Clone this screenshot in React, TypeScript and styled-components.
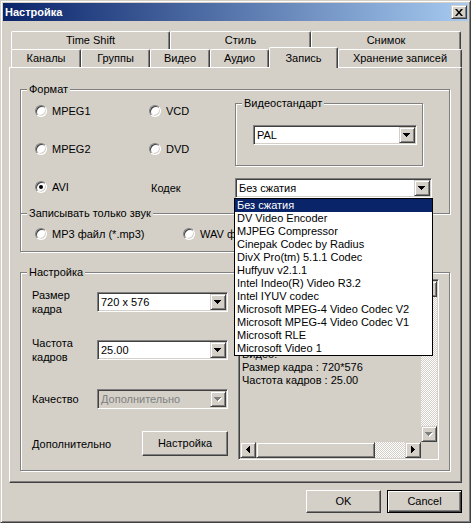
import React from 'react';
import styled, { createGlobalStyle, css } from 'styled-components';

const face = '#d4d0c8';
const light = '#ffffff';
const shadow = '#808080';
const dark = '#404040';
const navy = '#0a246a';

const GlobalStyle = createGlobalStyle`
  html, body {
    margin: 0;
    padding: 0;
    background: ${face};
  }

  body {
    font-family: "Liberation Sans", Arial, sans-serif;
    font-size: 11px;
    color: #000;
  }

  * {
    box-sizing: border-box;
  }
`;

const rowOneTabs = [
  { label: 'Time Shift', w: 159 },
  { label: 'Стиль', w: 141 },
  { label: 'Снимок', w: 150 }
];

const rowTwoTabs = [
  { label: 'Каналы', w: 70 },
  { label: 'Группы', w: 69 },
  { label: 'Видео', w: 60 },
  { label: 'Аудио', w: 59 },
  { label: 'Запись', w: 69, active: true },
  { label: 'Хранение записей', w: 124 }
];

const codecs = [
  'Без сжатия',
  'DV Video Encoder',
  'MJPEG Compressor',
  'Cinepak Codec by Radius',
  'DivX Pro(tm) 5.1.1 Codec',
  'Huffyuv v2.1.1',
  'Intel Indeo(R) Video R3.2',
  'Intel IYUV codec',
  'Microsoft MPEG-4 Video Codec V2',
  'Microsoft MPEG-4 Video Codec V1',
  'Microsoft RLE',
  'Microsoft Video 1'
];

// the first lines sit under the open codec list, so they stay blank
const memoLines = [
  '',
  '',
  '',
  '',
  '',
  'Видео:',
  'Размер кадра : 720*576',
  'Частота кадров : 25.00'
];

const Window = styled.div`
  width: 471px;
  height: 523px;
  background: ${face};
  border: 1px solid;
  border-color: ${face} ${dark} ${dark} ${face};
  box-shadow: inset 1px 1px ${light}, inset -1px -1px ${shadow};
  padding: 2px;
  display: flex;
  flex-direction: column;
`;

const TitleBar = styled.div`
  height: 18px;
  flex: none;
  display: flex;
  align-items: center;
  justify-content: space-between;
  padding: 0 1px 0 2px;
  background: linear-gradient(to right, ${navy}, #a6caf0);
`;

const TitleText = styled.span`
  color: ${light};
  font-weight: bold;
  font-size: 11px;
  line-height: 18px;
`;

const Bevel = styled.div<{ $w: number; $h: number }>`
  width: ${p => p.$w}px;
  height: ${p => p.$h}px;
  flex: none;
  background: ${face};
  border: 1px solid;
  border-color: ${face} ${dark} ${dark} ${face};
  box-shadow: inset 1px 1px ${light}, inset -1px -1px ${shadow};
  display: flex;
  align-items: center;
  justify-content: center;
`;

const Body = styled.div`
  flex: 1;
  display: flex;
  flex-direction: column;
  padding: 10px 6px 0;
`;

const TabRow = styled.div`
  display: flex;
  height: 18px;
  padding-left: 2px;
  align-items: flex-end;
`;

const Tab = styled.div<{ $w: number; $active?: boolean }>`
  width: ${p => p.$w}px;
  height: 18px;
  flex: none;
  display: flex;
  align-items: center;
  justify-content: center;
  background: ${face};
  border-top: 1px solid ${light};
  border-left: 1px solid ${light};
  border-right: 1px solid ${dark};
  box-shadow: inset -1px 0 ${shadow};
  border-top-left-radius: 2px;
  border-top-right-radius: 2px;
  white-space: nowrap;
  line-height: 13px;

  ${p => p.$active && css`
    height: 21px;
    margin-bottom: -1px;
    position: relative;
    z-index: 2;
  `}
`;

const Panel = styled.div`
  height: 416px;
  flex: none;
  border: 1px solid;
  border-color: ${light} ${dark} ${dark} ${light};
  box-shadow: inset -1px -1px ${shadow};
  padding: 0 0 0 10px;
`;

const Group = styled.div<{ $w: number; $h: number; $top: number }>`
  position: relative;
  width: ${p => p.$w}px;
  height: ${p => p.$h}px;
  margin-top: ${p => p.$top}px;
  border: 1px solid ${shadow};
  box-shadow: inset 1px 1px ${light}, 1px 1px ${light};
`;

const GroupLabel = styled.span`
  position: absolute;
  top: -7px;
  left: 6px;
  padding: 0 2px;
  background: ${face};
  line-height: 13px;
  white-space: nowrap;
`;

const FormatBody = styled.div`
  display: flex;
  padding: 11px 0 0 14px;
`;

const RadioGrid = styled.div`
  display: grid;
  grid-template-columns: 114px 86px;
  grid-auto-rows: 20px;
  row-gap: 18px;
  align-items: center;
`;

const RadioItem = styled.label`
  display: flex;
  align-items: center;
  gap: 5px;
  white-space: nowrap;
  line-height: 13px;
`;

const RadioDot = styled.span<{ $checked?: boolean }>`
  position: relative;
  width: 12px;
  height: 12px;
  flex: none;
  border-radius: 50%;
  background: ${light};
  border: 1px solid;
  border-color: ${shadow} ${light} ${light} ${shadow};
  box-shadow: inset 1px 1px ${dark}, inset -1px -1px ${face};

  &::after {
    content: '';
    display: ${p => (p.$checked ? 'block' : 'none')};
    position: absolute;
    left: 3px;
    top: 3px;
    width: 4px;
    height: 4px;
    border-radius: 50%;
    background: #000;
  }
`;

const FieldLabel = styled.span`
  padding-left: 2px;
  line-height: 13px;
  margin-top: 3px;
`;

const RightCol = styled.div`
  display: flex;
  flex-direction: column;
  padding-top: 2px;
`;

const StandardBody = styled.div`
  padding: 21px 0 0 17px;
`;

const CodecWrap = styled.div`
  position: relative;
  margin-top: 12px;
`;

const ComboFrame = styled.div<{ $w: number; $disabled?: boolean }>`
  width: ${p => p.$w}px;
  height: 20px;
  flex: none;
  display: flex;
  align-items: stretch;
  padding: 1px;
  border: 1px solid;
  border-color: ${shadow} ${light} ${light} ${shadow};
  box-shadow: inset 1px 1px ${dark}, inset -1px -1px ${face};
  background: ${p => (p.$disabled ? face : light)};
  color: ${p => (p.$disabled ? shadow : '#000')};
`;

const ComboText = styled.span`
  flex: 1;
  padding-left: 2px;
  line-height: 16px;
  white-space: nowrap;
  overflow: hidden;
`;

const DropList = styled.div`
  position: absolute;
  top: 100%;
  left: -1px;
  width: 199px;
  z-index: 10;
  background: ${light};
  border: 1px solid #000;
`;

const DropItem = styled.div<{ $selected?: boolean }>`
  height: 13px;
  line-height: 13px;
  padding-left: 2px;
  white-space: nowrap;
  background: ${p => (p.$selected ? navy : 'transparent')};
  color: ${p => (p.$selected ? light : '#000')};
`;

const SoundBody = styled.div`
  display: grid;
  grid-template-columns: 148px auto;
  align-items: center;
  height: 20px;
  margin: 10px 0 0 14px;
`;

const SettingsBody = styled.div`
  display: flex;
  gap: 10px;
  padding: 6px 0 0 11px;
`;

const SettingsLeft = styled.div`
  width: 196px;
  display: flex;
  flex-direction: column;
`;

const SettingRow = styled.div<{ $top: number; $h: number }>`
  height: ${p => p.$h}px;
  margin-top: ${p => p.$top}px;
  display: flex;
  align-items: center;
  justify-content: space-between;
`;

const RowLabel = styled.span`
  line-height: 14px;
  white-space: nowrap;
`;

const PushButton = styled.div<{ $w: number; $h: number; $default?: boolean }>`
  width: ${p => p.$w}px;
  height: ${p => p.$h}px;
  flex: none;
  display: flex;
  align-items: center;
  justify-content: center;
  background: ${face};
  border: 1px solid;
  border-color: ${light} ${dark} ${dark} ${light};
  box-shadow: inset -1px -1px ${shadow};
  line-height: 13px;

  ${p => p.$default && css`
    border-color: #000;
    box-shadow: inset 1px 1px ${light}, inset -1px -1px ${dark}, inset -2px -2px ${shadow};
  `}
`;

const Memo = styled.div`
  width: 201px;
  height: 181px;
  flex: none;
  padding: 1px;
  border: 1px solid;
  border-color: ${shadow} ${light} ${light} ${shadow};
  box-shadow: inset 1px 1px ${dark}, inset -1px -1px ${face};
  display: grid;
  grid-template-columns: 181px 16px;
  grid-template-rows: 161px 16px;
`;

const MemoText = styled.div`
  padding: 2px 0 0 2px;
  line-height: 13px;
  white-space: pre;
  overflow: hidden;
`;

const ScrollBar = styled.div<{ $vertical?: boolean }>`
  display: flex;
  flex-direction: ${p => (p.$vertical ? 'column' : 'row')};
`;

const ScrollTrack = styled.div`
  flex: 1;
  background-color: ${light};
  background-image: repeating-conic-gradient(${face} 0 25%, ${light} 0 50%);
  background-size: 2px 2px;
`;

const ButtonRow = styled.div`
  display: flex;
  justify-content: flex-end;
  gap: 6px;
  margin-top: 7px;
`;

type Dir = 'up' | 'down' | 'left' | 'right';

const glyphs: Record<Dir, { d: string; w: number; h: number }> = {
  down: { d: 'M0 0h7L3.5 4z', w: 7, h: 4 },
  up: { d: 'M3.5 0L7 4H0z', w: 7, h: 4 },
  left: { d: 'M4 0v7L0 3.5z', w: 4, h: 7 },
  right: { d: 'M0 0v7l4-3.5z', w: 4, h: 7 }
};

function Arrow ({ dir, disabled }: { dir: Dir; disabled?: boolean }): React.ReactElement {
  const g = glyphs[dir];

  return (
    <svg width={g.w + 1} height={g.h + 1} viewBox={`0 0 ${g.w + 1} ${g.h + 1}`} shapeRendering='crispEdges'>
      {disabled && <path d={g.d} fill={light} transform='translate(1 1)' />}
      <path d={g.d} fill={disabled ? shadow : '#000'} />
    </svg>
  );
}

function Radio ({ label, checked }: { label: string; checked?: boolean }): React.ReactElement {
  return (
    <RadioItem>
      <RadioDot $checked={checked} />
      {label}
    </RadioItem>
  );
}

function ComboBox ({ w, value, disabled }: { w: number; value: string; disabled?: boolean }): React.ReactElement {
  return (
    <ComboFrame $w={w} $disabled={disabled}>
      <ComboText>{value}</ComboText>
      <Bevel $w={16} $h={16}><Arrow dir='down' disabled={disabled} /></Bevel>
    </ComboFrame>
  );
}

export default function App (): React.ReactElement {
  return (
    <>
      <GlobalStyle />
      <Window>
        <TitleBar>
          <TitleText>Настройка</TitleText>
          <Bevel $w={16} $h={14}>
            <svg width='8' height='7' viewBox='0 0 8 7'>
              <path d='M0 0h2l2 2.5L6 0h2L5 3.5 8 7H6L4 4.5 2 7H0l3-3.5z' fill='#000' />
            </svg>
          </Bevel>
        </TitleBar>
        <Body>
          <TabRow>
            {rowOneTabs.map(t => <Tab key={t.label} $w={t.w}>{t.label}</Tab>)}
          </TabRow>
          <TabRow>
            {rowTwoTabs.map(t => <Tab key={t.label} $w={t.w} $active={t.active}>{t.label}</Tab>)}
          </TabRow>
          <Panel>
            <Group $w={430} $h={125} $top={21}>
              <GroupLabel>Формат</GroupLabel>
              <FormatBody>
                <RadioGrid>
                  <Radio label='MPEG1' />
                  <Radio label='VCD' />
                  <Radio label='MPEG2' />
                  <Radio label='DVD' />
                  <Radio label='AVI' checked />
                  <FieldLabel>Кодек</FieldLabel>
                </RadioGrid>
                <RightCol>
                  <Group $w={188} $h={63} $top={0}>
                    <GroupLabel>Видеостандарт</GroupLabel>
                    <StandardBody>
                      <ComboBox w={164} value='PAL' />
                    </StandardBody>
                  </Group>
                  <CodecWrap>
                    <ComboBox w={197} value='Без сжатия' />
                    <DropList>
                      {codecs.map((c, i) => <DropItem key={c} $selected={i === 0}>{c}</DropItem>)}
                    </DropList>
                  </CodecWrap>
                </RightCol>
              </FormatBody>
            </Group>
            <Group $w={410} $h={39} $top={-1}>
              <GroupLabel>Записывать только звук</GroupLabel>
              <SoundBody>
                <Radio label='MP3 файл (*.mp3)' />
                <Radio label='WAV файл (*.wav)' />
              </SoundBody>
            </Group>
            <Group $w={430} $h={199} $top={20}>
              <GroupLabel>Настройка</GroupLabel>
              <SettingsBody>
                <SettingsLeft>
                  <SettingRow $top={9} $h={28}>
                    <RowLabel>Размер<br />кадра</RowLabel>
                    <ComboBox w={131} value='720 x 576' />
                  </SettingRow>
                  <SettingRow $top={20} $h={28}>
                    <RowLabel>Частота<br />кадров</RowLabel>
                    <ComboBox w={131} value='25.00' />
                  </SettingRow>
                  <SettingRow $top={25} $h={20}>
                    <RowLabel>Качество</RowLabel>
                    <ComboBox w={131} value='Дополнительно' disabled />
                  </SettingRow>
                  <SettingRow $top={22} $h={25}>
                    <RowLabel>Дополнительно</RowLabel>
                    <PushButton $w={86} $h={25}>Настройка</PushButton>
                  </SettingRow>
                </SettingsLeft>
                <Memo>
                  <MemoText>{memoLines.join('\n')}</MemoText>
                  <ScrollBar $vertical>
                    <Bevel $w={16} $h={16}><Arrow dir='up' disabled /></Bevel>
                    <ScrollTrack />
                    <Bevel $w={16} $h={16}><Arrow dir='down' disabled /></Bevel>
                  </ScrollBar>
                  <ScrollBar>
                    <Bevel $w={16} $h={16}><Arrow dir='left' /></Bevel>
                    <Bevel $w={119} $h={16} />
                    <ScrollTrack />
                    <Bevel $w={16} $h={16}><Arrow dir='right' /></Bevel>
                  </ScrollBar>
                  <div />
                </Memo>
              </SettingsBody>
            </Group>
          </Panel>
          <ButtonRow>
            <PushButton $w={75} $h={23}>OK</PushButton>
            <PushButton $w={75} $h={23} $default>Cancel</PushButton>
          </ButtonRow>
        </Body>
      </Window>
    </>
  );
}
